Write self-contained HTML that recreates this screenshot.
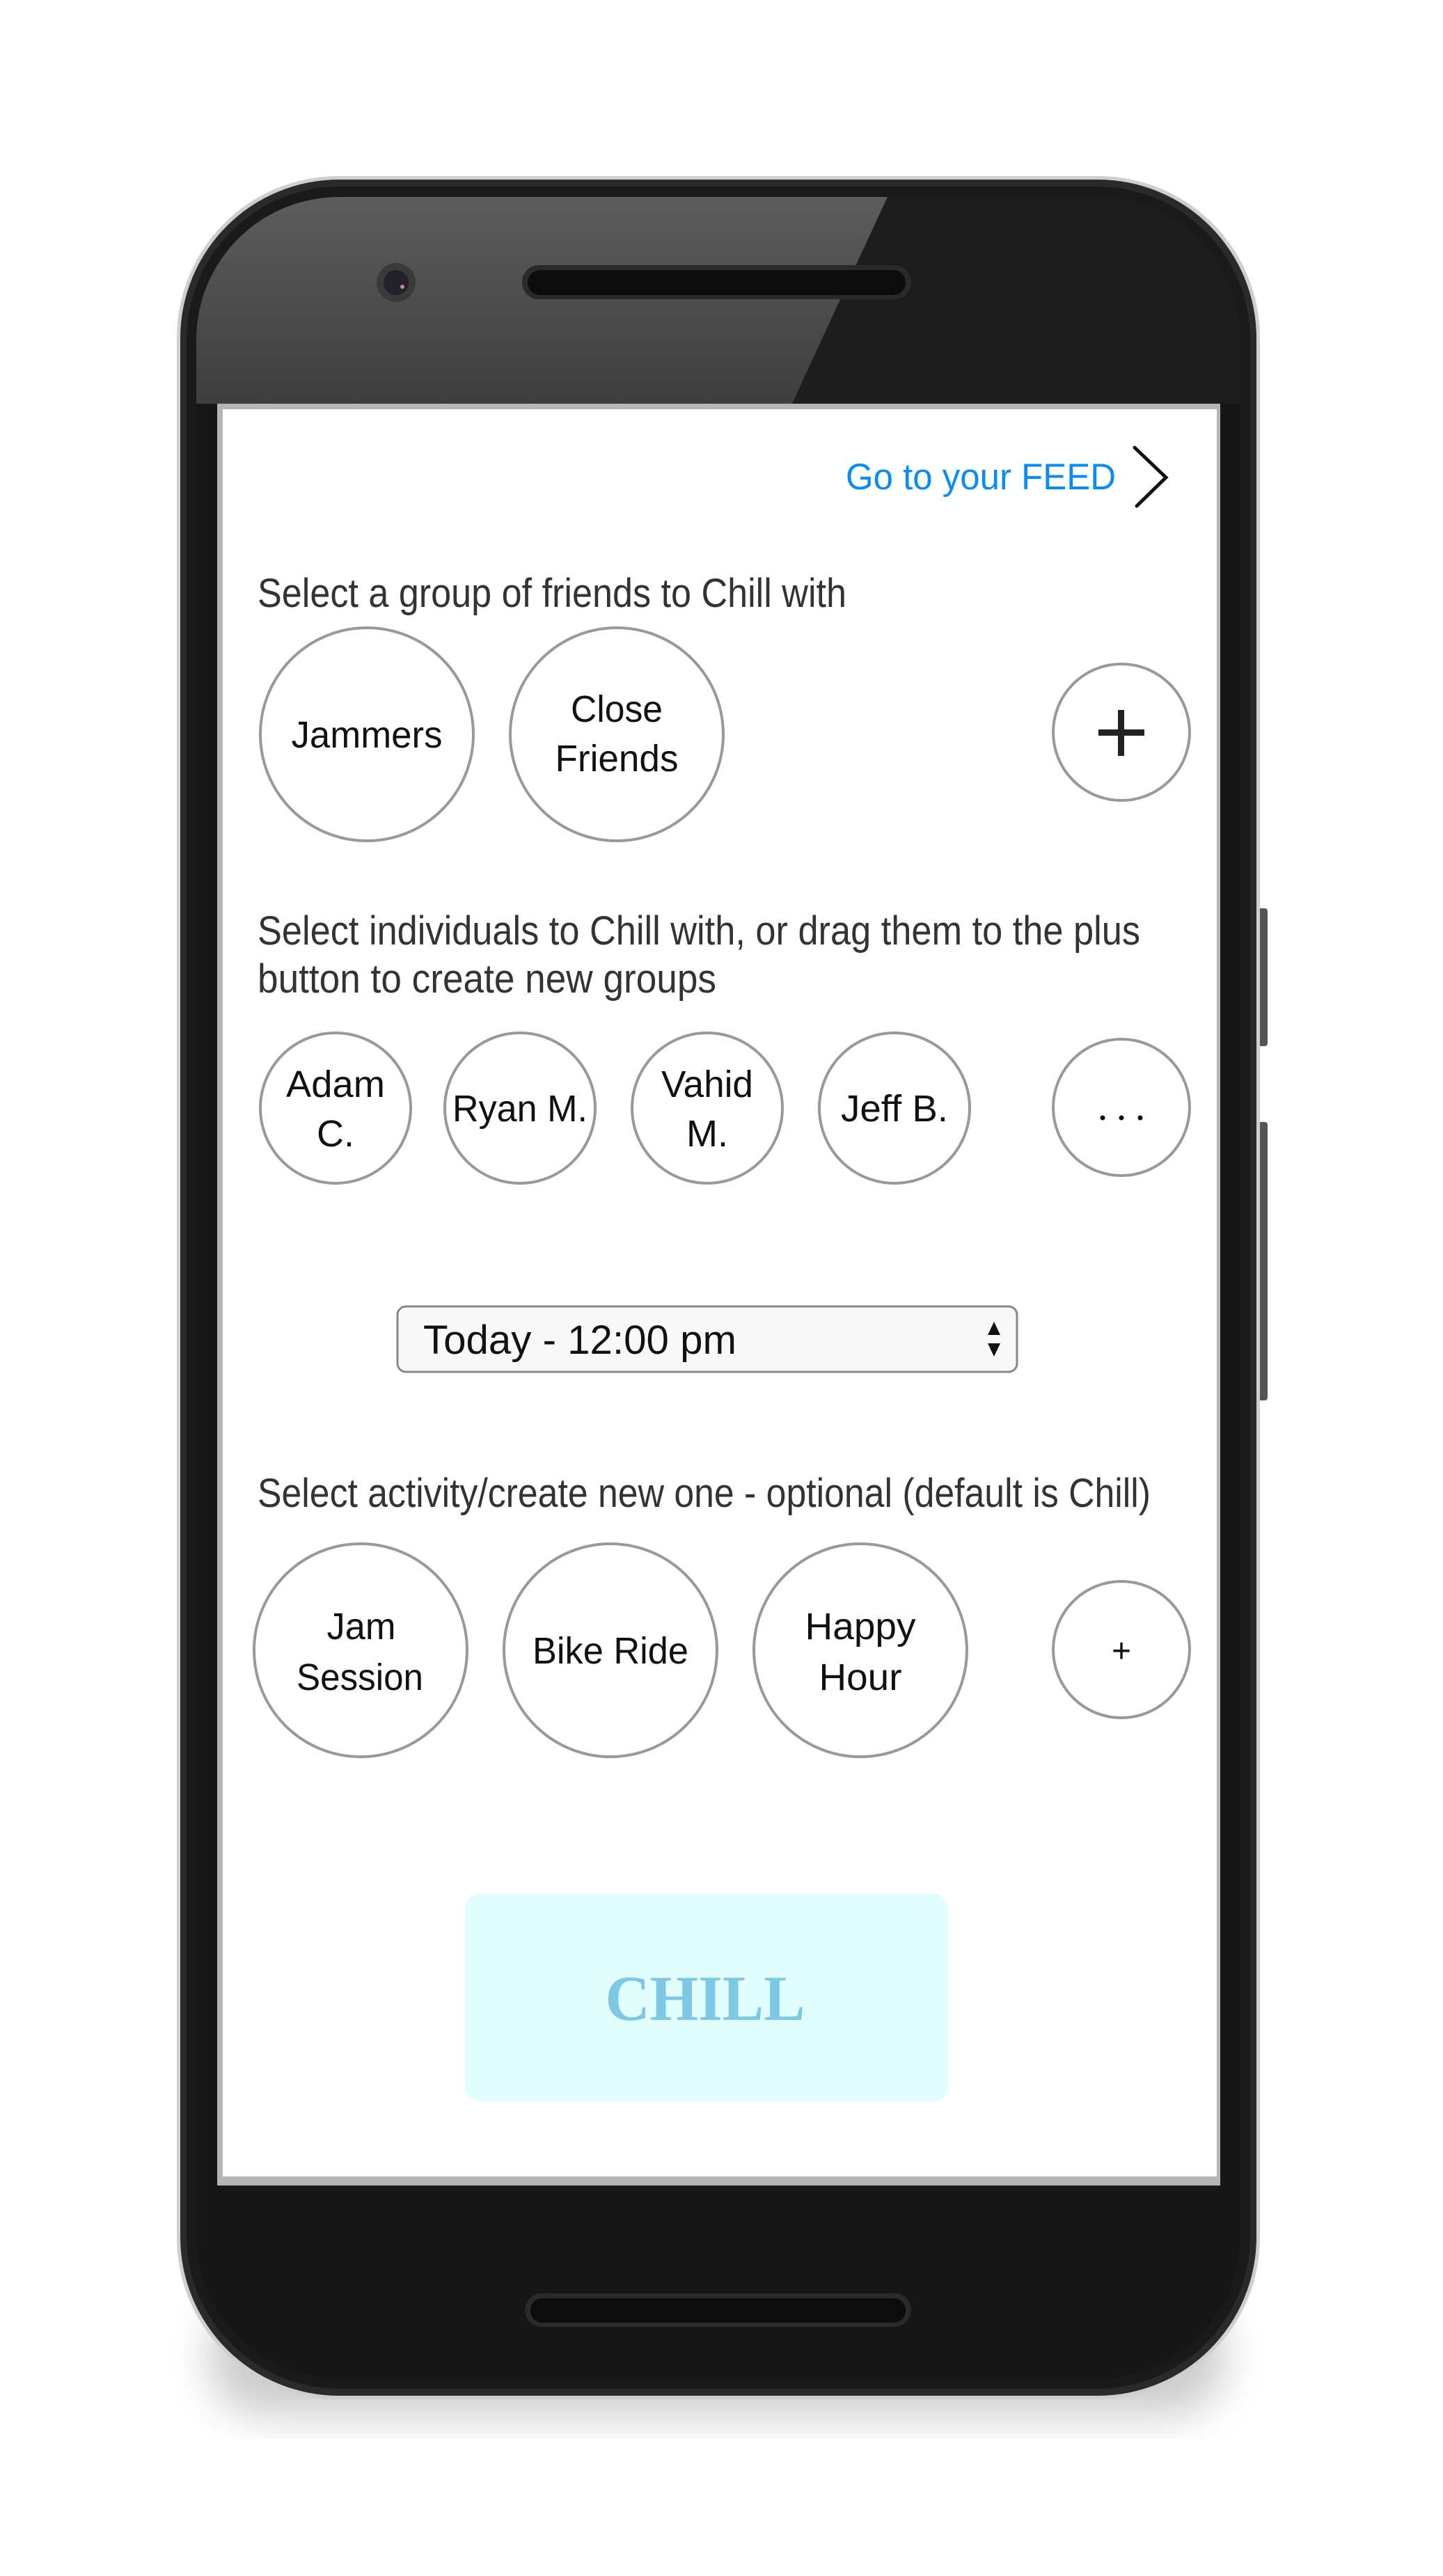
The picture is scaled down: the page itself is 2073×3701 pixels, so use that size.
<!DOCTYPE html>
<html><head><meta charset="utf-8"><style>
html,body{margin:0;padding:0;background:#fff;}
svg{display:block;}
text{font-family:"Liberation Sans",sans-serif;}
text.serif{font-family:"Liberation Serif",serif;}
</style></head><body>
<svg width="2073" height="3701" viewBox="0 0 2073 3701" xmlns="http://www.w3.org/2000/svg">
<defs>
<linearGradient id="glass" x1="0" y1="0" x2="0" y2="1">
<stop offset="0" stop-color="#5c5c5c"/><stop offset="1" stop-color="#3e3e3e"/>
</linearGradient>
<filter id="sh" x="-20%" y="-20%" width="140%" height="140%"><feGaussianBlur stdDeviation="30"/></filter>
<clipPath id="body"><rect x="282" y="283" width="1500" height="3134" rx="205" ry="205"/></clipPath>
</defs>
<rect x="300" y="3300" width="1460" height="170" rx="80" fill="#000" opacity="0.2" filter="url(#sh)"/>
<rect x="1805" y="1305" width="16" height="198" rx="4" fill="#555"/>
<rect x="1805" y="1612" width="16" height="400" rx="4" fill="#555"/>
<rect x="254" y="253" width="1556" height="3194" rx="232" ry="232" fill="#cfcfcf"/>
<rect x="259" y="258" width="1546" height="3184" rx="228" ry="228" fill="#2a2a2a"/>
<rect x="268" y="268" width="1528" height="3164" rx="220" ry="220" fill="#1a1a1a"/>
<rect x="282" y="283" width="1500" height="3134" rx="205" ry="205" fill="#161616"/>
<g clip-path="url(#body)">
<polygon points="282,283 1275,283 1138,580 282,580" fill="url(#glass)"/>
<polygon points="1275,283 1782,283 1782,580 1138,580" fill="#1d1d1d"/>
</g>
<circle cx="569" cy="406" r="28" fill="#3a3a3a"/>
<circle cx="569" cy="406" r="18" fill="#22222c"/>
<circle cx="578" cy="412" r="3" fill="#c88"/>
<rect x="750" y="381" width="559" height="49" rx="24" fill="#2a2a2a"/>
<rect x="758" y="388" width="543" height="36" rx="18" fill="#0c0c0c"/>
<rect x="754" y="3295" width="555" height="48" rx="24" fill="#2a2a2a"/>
<rect x="762" y="3302" width="539" height="35" rx="17" fill="#0c0c0c"/>
<rect x="312" y="580" width="1441" height="2560" fill="#b5b5b5"/>
<rect x="320" y="588" width="1428" height="2539" fill="#fff"/>

<text x="1215" y="703" font-size="53" fill="#0a8cf5" textLength="388" lengthAdjust="spacingAndGlyphs">Go to your FEED</text>
<polyline points="1630,643 1675,686 1633,727" fill="none" stroke="#111" stroke-width="5" stroke-linecap="round"/>

<text x="370" y="872" font-size="58" fill="#333" textLength="846" lengthAdjust="spacingAndGlyphs">Select a group of friends to Chill with</text>
<g fill="none" stroke="#999" stroke-width="4">
<circle cx="527" cy="1055" r="153"/>
<circle cx="886" cy="1055" r="153"/>
<circle cx="1611" cy="1052" r="98"/>
</g>
<g font-size="54" fill="#111" text-anchor="middle">
<text x="527" y="1074" textLength="217" lengthAdjust="spacingAndGlyphs">Jammers</text>
<text x="886" y="1037" textLength="132" lengthAdjust="spacingAndGlyphs">Close</text>
<text x="886" y="1108" textLength="177" lengthAdjust="spacingAndGlyphs">Friends</text>
</g>
<rect x="1578" y="1048" width="66" height="9" fill="#222"/>
<rect x="1606" y="1020" width="9" height="66" fill="#222"/>

<text x="370" y="1357" font-size="58" fill="#333" textLength="1268" lengthAdjust="spacingAndGlyphs">Select individuals to Chill with, or drag them to the plus</text>
<text x="370" y="1426" font-size="58" fill="#333" textLength="659" lengthAdjust="spacingAndGlyphs">button to create new groups</text>
<g fill="none" stroke="#999" stroke-width="4">
<circle cx="482" cy="1592" r="108"/>
<circle cx="747" cy="1592" r="108"/>
<circle cx="1016" cy="1592" r="108"/>
<circle cx="1285" cy="1592" r="108"/>
<circle cx="1611" cy="1591" r="98"/>
</g>
<g font-size="54" fill="#111" text-anchor="middle">
<text x="482" y="1576" textLength="142" lengthAdjust="spacingAndGlyphs">Adam</text>
<text x="482" y="1647">C.</text>
<text x="747" y="1611" textLength="194" lengthAdjust="spacingAndGlyphs">Ryan M.</text>
<text x="1016" y="1576" textLength="132" lengthAdjust="spacingAndGlyphs">Vahid</text>
<text x="1016" y="1647">M.</text>
<text x="1285" y="1611" textLength="154" lengthAdjust="spacingAndGlyphs">Jeff B.</text>
</g>
<g fill="#111"><circle cx="1584" cy="1606" r="3.5"/><circle cx="1611" cy="1606" r="3.5"/><circle cx="1638" cy="1606" r="3.5"/></g>

<rect x="571" y="1877" width="890" height="94" rx="12" fill="#f8f8f8" stroke="#888" stroke-width="3"/>
<text x="608" y="1945" font-size="58" fill="#111" textLength="450" lengthAdjust="spacingAndGlyphs">Today - 12:00 pm</text>
<polygon points="1419,1918 1437,1918 1428,1899" fill="#111"/>
<polygon points="1419,1930 1437,1930 1428,1949" fill="#111"/>

<text x="370" y="2165" font-size="58" fill="#333" textLength="1283" lengthAdjust="spacingAndGlyphs">Select activity/create new one - optional (default is Chill)</text>
<g fill="none" stroke="#999" stroke-width="4">
<circle cx="518" cy="2371" r="153"/>
<circle cx="877" cy="2371" r="153"/>
<circle cx="1236" cy="2371" r="153"/>
<circle cx="1611" cy="2370" r="98"/>
</g>
<g font-size="54" fill="#111" text-anchor="middle">
<text x="519" y="2355" textLength="99" lengthAdjust="spacingAndGlyphs">Jam</text>
<text x="517" y="2428" textLength="182" lengthAdjust="spacingAndGlyphs">Session</text>
<text x="877" y="2390" textLength="224" lengthAdjust="spacingAndGlyphs">Bike Ride</text>
<text x="1236" y="2355" textLength="159" lengthAdjust="spacingAndGlyphs">Happy</text>
<text x="1236" y="2428" textLength="119" lengthAdjust="spacingAndGlyphs">Hour</text>
<text x="1611" y="2388" font-size="48">+</text>
</g>

<rect x="668" y="2721" width="694" height="298" rx="22" fill="#e2fdfd"/>
<text class="serif" x="1013" y="2902" font-weight="bold" font-size="92" fill="#7ec8e6" text-anchor="middle" textLength="287" lengthAdjust="spacingAndGlyphs">CHILL</text>
</svg>
</body></html>
